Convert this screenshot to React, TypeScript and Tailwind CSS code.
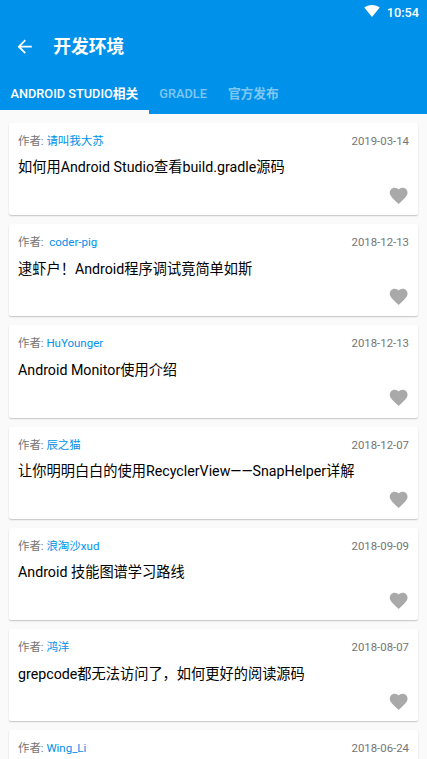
import clsx from 'clsx';
import { MdArrowBack, MdFavorite } from 'react-icons/md';

const tabs = [
  { latin: 'ANDROID STUDIO', cjk: '相关' },
  { latin: 'GRADLE', cjk: '' },
  { latin: '', cjk: '官方发布' }
];

const articles = [
  { author: '请叫我大苏', date: '2019-03-14', title: '如何用Android Studio查看build.gradle源码' },
  { author: '\u00a0coder-pig', date: '2018-12-13', title: '逮虾户！Android程序调试竟简单如斯' },
  { author: 'HuYounger', date: '2018-12-13', title: 'Android Monitor使用介绍' },
  { author: '辰之猫', date: '2018-12-07', title: '让你明明白白的使用RecyclerView——SnapHelper详解' },
  { author: '浪淘沙xud', date: '2018-09-09', title: 'Android 技能图谱学习路线' },
  { author: '鸿洋', date: '2018-08-07', title: 'grepcode都无法访问了，如何更好的阅读源码' },
  { author: 'Wing_Li', date: '2018-06-24', title: '' }
];

const StatusBar = () => {
  return (
    <div className="flex h-[21.5px] items-center justify-end gap-[7px] pr-2 text-[12.7px] font-medium">
      <svg width="16" height="12" viewBox="0 0 16 12" fill="currentColor">
        <path d="M8 12 0.3 2.5C2.4 0.9 5 0 8 0s5.6 0.9 7.7 2.5z" />
      </svg>
      <span className="pt-[3px]">10:54</span>
    </div>
  );
};

const Tabs = () => {
  return (
    <div className="flex h-[42.7px] text-[12.75px] font-medium">
      {tabs.map(({ latin, cjk }, index) => (
        <div
          key={latin + cjk}
          className={clsx(
            'flex items-center border-b-4 px-[10.5px] pt-[6px] whitespace-nowrap',
            index === 0 ? 'border-[#fafafa]' : 'border-transparent text-white/50'
          )}
        >
          {latin}
          {cjk && <span className="font-bold">{cjk}</span>}
        </div>
      ))}
    </div>
  );
};

const ArticleCard = ({ author, date, title }: { author: string; date: string; title: string }) => {
  return (
    <div className="flex h-[92.25px] shrink-0 flex-col rounded-[2px] bg-white px-[9px] pt-[9px] shadow-[0_1px_1.5px_rgba(0,0,0,0.22)]">
      <div className="flex justify-between text-[11.4px] leading-[18px] text-[#757575]">
        <div>
          作者: <span className="text-[11.5px] text-[#0091ea]">{author}</span>
        </div>
        <div>{date}</div>
      </div>
      <div className="mt-[6.5px] h-[22px] text-[14.22px] leading-[22px] text-black">{title}</div>
      <MdFavorite className="mt-[6.5px] self-end text-[21.33px] text-[#a9a9a9]" />
    </div>
  );
};

export default function App() {
  return (
    <div className="flex h-[759px] w-[427px] flex-col overflow-hidden bg-[#fafafa] font-[Roboto,'Noto_Sans_CJK_SC',sans-serif]">
      <header className="shrink-0 bg-[#0091ea] text-white">
        <StatusBar />
        <div className="flex h-[49.8px] items-center gap-[18px] pl-[14px]">
          <MdArrowBack className="text-[21.33px]" />
          <h1 className="pt-[2px] text-[17.78px] font-bold">开发环境</h1>
        </div>
        <Tabs />
      </header>
      <main className="flex flex-col gap-[9px] px-[9px] pt-[9px]">
        {articles.map((article) => (
          <ArticleCard key={article.author} {...article} />
        ))}
      </main>
    </div>
  );
}
